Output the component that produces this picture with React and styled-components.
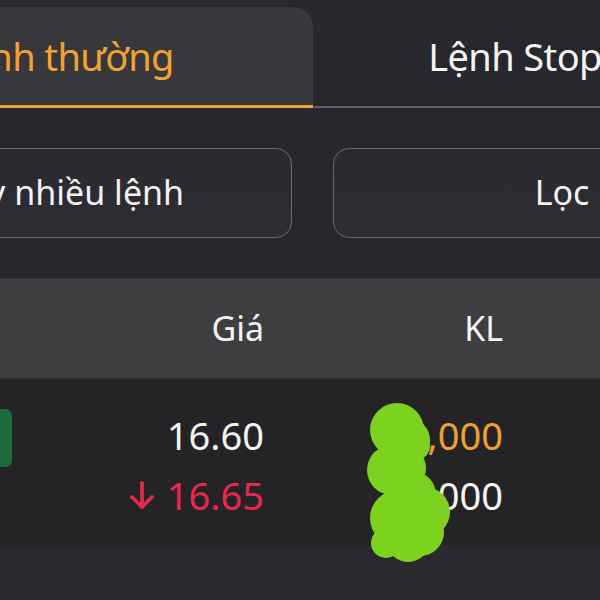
import React from "react";
import styled, { createGlobalStyle } from "styled-components";

const Global = createGlobalStyle`
  html, body { margin: 0; padding: 0; background: #27272d; }
  body { font-family: "Noto Sans", "Open Sans", sans-serif; overflow: hidden; }
`;

const Page = styled.div`
  position: relative;
  width: 600px;
  height: 600px;
  overflow: hidden;
  background: #27272d;
  color: #f2f2f2;
  display: flex;
  flex-direction: column;
`;

const TabBar = styled.div`
  display: flex;
  align-items: flex-end;
  height: 108px;
  margin-left: -190px;
  flex: none;
`;

const Tab = styled.div`
  flex: none;
  width: ${(p) => p.$w}px;
  height: ${(p) => (p.$active ? 101 : 2)}px;
  box-sizing: border-box;
  background: ${(p) => (p.$active ? "#38383c" : "transparent")};
  border-top-right-radius: 20px;
  border-top-left-radius: 20px;
  border-bottom: ${(p) => (p.$active ? "3px solid #f0a23a" : "2px solid #5f5f64")};
  color: ${(p) => (p.$active ? "#f2a233" : "#f4f4f4")};
  font-size: 38px;
  letter-spacing: -0.6px;
  line-height: 98px;
  text-align: center;
  white-space: nowrap;
  position: relative;
`;

const TabLabel = styled.span`
  display: block;
  ${(p) => (p.$floating ? "position: absolute; left: 0; right: 0; bottom: -2px; height: 101px; line-height: 98px;" : "")}
`;

const ButtonRow = styled.div`
  display: flex;
  gap: 41px;
  margin-top: 40px;
  margin-left: -166px;
  flex: none;
`;

const ActionButton = styled.div`
  flex: none;
  width: 458px;
  height: 90px;
  box-sizing: border-box;
  border: 1.5px solid #6a6a70;
  border-radius: 16px;
  background: linear-gradient(180deg, #2a2a2e 0%, #2e2d35 100%);
  color: #f2f2f2;
  font-size: 34px;
  line-height: 87px;
  text-align: center;
  white-space: nowrap;
`;

const HeaderRow = styled.div`
  margin-top: 40px;
  height: 100px;
  flex: none;
  background: #3e3e41;
  display: grid;
  grid-template-columns: 264px 239px 1fr;
  font-size: 34px;
  line-height: 100px;
  color: #f4f4f4;
  border-bottom: 2px solid #2b2b2e;
  box-shadow: inset 0 1px 0 #2e2e32;
`;

const HeadCell = styled.div`
  text-align: right;
`;

const Body = styled.div`
  flex: none;
  height: 165px;
  background: #242427;
  display: grid;
  grid-template-columns: 264px 239px 1fr;
  box-sizing: border-box;
  padding-top: 25px;
  font-size: 38px;
  line-height: 60px;
`;

const Cell = styled.div`
  grid-row: 1;
  grid-column: ${(p) => p.$col};
  display: flex;
  flex-direction: column;
  align-items: flex-end;
`;

const SideCell = styled.div`
  grid-column: 1;
  grid-row: 1;
  justify-self: start;
`;

const Badge = styled.div`
  width: 40px;
  height: 58px;
  margin-left: -28px;
  margin-top: 4px;
  border-radius: 7px;
  background: #1f6c3a;
`;

const Value = styled.div`
  color: ${(p) => p.$color || "#f4f4f4"};
  display: flex;
  align-items: center;
  gap: 12px;
  white-space: nowrap;
`;

const Footer = styled.div`
  flex: 1;
  background: #29292e;
`;

const Scribble = styled.svg`
  position: absolute;
  left: 0;
  top: 0;
  pointer-events: none;
`;

const ArrowDown = () => (
  <svg width="26" height="30" viewBox="0 0 26 30" fill="none" stroke="#e8284a" strokeWidth="3.8" strokeLinecap="round" strokeLinejoin="round">
    <path d="M13 3 V27" />
    <path d="M3 17 L13 27 L23 17" />
  </svg>
);

export default function App() {
  return (
    <>
      <Global />
      <Page>
        <TabBar>
          <Tab $w={503} $active>
            <TabLabel>Lệnh thường</TabLabel>
          </Tab>
          <Tab $w={404}>
            <TabLabel $floating>Lệnh Stop</TabLabel>
          </Tab>
        </TabBar>
        <ButtonRow>
          <ActionButton>Hủy nhiều lệnh</ActionButton>
          <ActionButton>Lọc</ActionButton>
        </ButtonRow>
        <HeaderRow>
          <HeadCell>Giá</HeadCell>
          <HeadCell>KL</HeadCell>
          <div />
        </HeaderRow>
        <Body>
          <Cell $col={1}>
            <Value>16.60</Value>
            <Value $color="#e8284a">
              <ArrowDown />
              16.65
            </Value>
          </Cell>
          <SideCell>
            <Badge />
          </SideCell>
          <Cell $col={2}>
            <Value $color="#f0a030">1,000</Value>
            <Value>1,000</Value>
          </Cell>
        </Body>
        <Footer />
        <Scribble width="600" height="600" viewBox="0 0 600 600">
          <g fill="#7dd21f">
            <circle cx="397" cy="430" r="27" />
            <circle cx="408" cy="440" r="22" />
            <circle cx="416" cy="446" r="14" />
            <circle cx="392" cy="470" r="25" />
            <circle cx="404" cy="468" r="22" />
            <circle cx="412" cy="495" r="24" />
            <circle cx="425" cy="512" r="25" />
            <circle cx="398" cy="518" r="28" />
            <circle cx="420" cy="532" r="24" />
            <circle cx="408" cy="540" r="22" />
            <circle cx="386" cy="543" r="15" />
          </g>
        </Scribble>
      </Page>
    </>
  );
}
